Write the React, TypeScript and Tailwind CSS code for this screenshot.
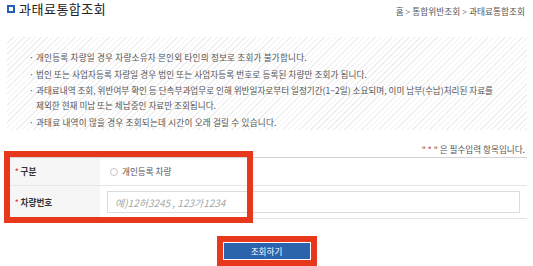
import React from "react";

const font = "font-['Noto_Sans_CJK_KR','Noto_Sans',sans-serif]";

export default function App() {
  return (
    <div className={`w-[533px] h-[266px] bg-white overflow-hidden ${font}`}>
      {/* header */}
      <div className="flex justify-between items-start h-[37px] pl-[7px] pr-[8px]">
        <div className="flex items-center gap-[4px] h-[18px]">
          <span className="w-[8px] h-[8px] border-[2.5px] border-[#1f5fb5] bg-white box-border" />
          <span className="text-[13px] leading-[18px] text-[#222] tracking-[0.5px]">과태료통합조회</span>
        </div>
        <div className="pt-[7px] text-[8.7px] leading-[10px] text-[#555]">
          홈 <span className="text-[#888]">&gt;</span> 통합위반조회 <span className="text-[#888]">&gt;</span> 과태료통합조회
        </div>
      </div>

      {/* info box */}
      <div className="mx-[7px] w-[520px] h-[93px] pt-[13px] pl-[22px] bg-[repeating-linear-gradient(135deg,#efefef_0px,#efefef_1px,#ffffff_1px,#ffffff_4px)]">
        <ul className="flex flex-col gap-[1.5px] text-[8.6px] leading-[15px] text-[#555]">
          <li className="flex">
            <span className="w-[7px] shrink-0">·</span>
            <span className="tracking-[0.2px]">개인등록 차량일 경우 차량소유자 본인외 타인의 정보로 조회가 불가합니다.</span>
          </li>
          <li className="flex">
            <span className="w-[7px] shrink-0">·</span>
            <span className="tracking-[0.1px]">법인 또는 사업자등록 차량일 경우 법인 또는 사업자등록 번호로 등록된 차량만 조회가 됩니다.</span>
          </li>
          <li className="flex">
            <span className="w-[7px] shrink-0">·</span>
            <span className="flex flex-col">
              <span className="whitespace-nowrap">과태료내역 조회, 위반여부 확인 등 단속부과업무로 인해 위반일자로부터 일정기간(1~2일) 소요되며, 이미 납부(수납)처리된 자료를</span>
              <span>제외한 현재 미납 또는 체납중인 자료만 조회됩니다.</span>
            </span>
          </li>
          <li className="flex">
            <span className="w-[7px] shrink-0">·</span>
            <span className="tracking-[0.2px]">과태료 내역이 많을 경우 조회되는데 시간이 오래 걸릴 수 있습니다.</span>
          </li>
        </ul>
      </div>

      {/* required note */}
      <div className="mt-[13px] pr-[8px] text-right text-[8.6px] leading-[12px] text-[#555]">
        " <span className="text-[#e0303a]">*</span> " 은 필수입력 항목입니다.
      </div>

      {/* form table */}
      <div className="relative mt-[2px] mx-[7px] w-[520px] border-t border-[#d4d4d4] border-b border-b-[#e2e2e2]">
        <div className="flex h-[27px]">
          <div className="w-[93px] bg-[#f6f6f6] flex items-center pl-[8px] text-[8.6px] font-bold text-[#333]">
            <span className="text-[#e0303a] mr-[2px] text-[7px]">*</span>구분
          </div>
          <div className="flex-1 flex items-center pl-[10px] gap-[4px] text-[8.6px] text-[#555]">
            <span className="w-[8px] h-[8px] rounded-full border border-[#c8c8c8] bg-white" />
            개인등록 차량
          </div>
        </div>
        <div className="flex h-[33px] border-t border-[#e6e6e6]">
          <div className="w-[93px] bg-[#f6f6f6] flex items-center pl-[8px] text-[8.6px] font-bold text-[#333]">
            <span className="text-[#e0303a] mr-[2px] text-[7px]">*</span>차량번호
          </div>
          <div className="flex-1 flex items-center pl-[7px] pr-[7px]">
            <div className="w-full h-[22px] border border-[#dcdcdc] bg-white flex items-center pl-[7px] text-[10px] italic text-[#a8a8a8]">
              예)12허3245 , 123가1234
            </div>
          </div>
        </div>
        {/* red annotation */}
        <div className="absolute left-[-3px] top-[-7px] w-[249px] h-[72px] border-[6px] border-[#e8381c] pointer-events-none" />
      </div>

      {/* button */}
      <div className="flex justify-center mt-[24px]">
        <div className="relative">
          <div className="w-[86px] h-[16px] bg-[#2b63ad] flex items-center justify-center text-[8.6px] text-white">
            조회하기
          </div>
          <div className="absolute -left-[7px] -top-[7px] -right-[7px] -bottom-[7px] border-[6px] border-[#e8381c] pointer-events-none" />
        </div>
      </div>
    </div>
  );
}
